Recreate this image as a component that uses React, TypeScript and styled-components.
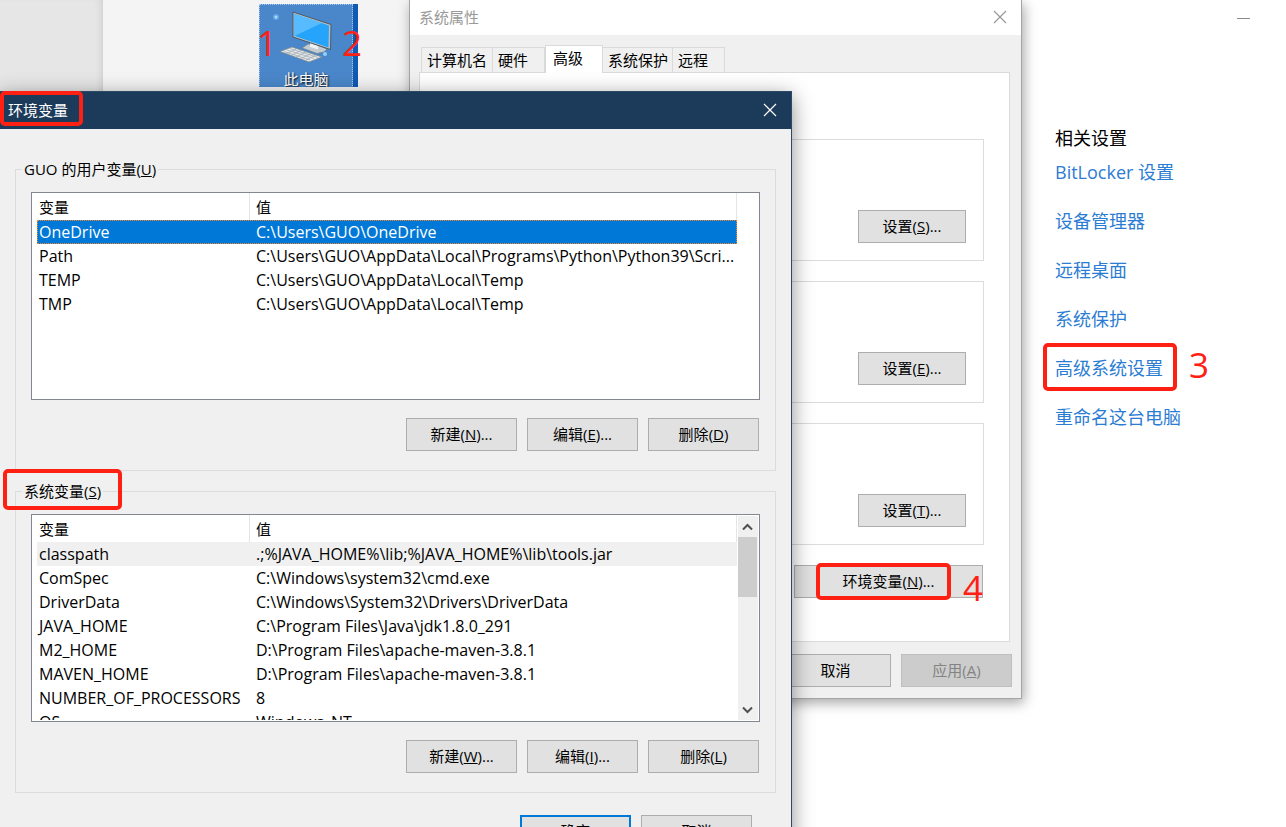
import React from "react";
import styled, { createGlobalStyle } from "styled-components";

const GlobalStyle = createGlobalStyle`
  * { box-sizing: border-box; }
  body {
    margin: 0;
    background: #fff;
    color: #000;
    font: 15px/20px "Open Sans", "Noto Sans CJK SC", sans-serif;
  }
  button { font: inherit; color: inherit; margin: 0; padding: 0; }
`;

const RED = "#ff2014";

const Desktop = styled.main`
  position: relative;
  display: flex;
  height: 100vh;
  min-height: 480px;
  overflow: hidden;
`;

const NavPane = styled.div`
  flex: 0 0 103px;
  background: #e6e6e6;
  box-shadow: inset -6px 0 8px -6px rgba(0, 0, 0, 0.15);
`;

const ContentPane = styled.div`
  flex: 0 0 500px;
  padding: 4px 0 0 156px;
  background: #f4f4f4;
`;

const ShortcutTile = styled.figure`
  display: flex;
  width: 99px;
  height: 83px;
  margin: 0;
  padding-right: 5px;
  overflow: hidden;
  background: #1059b5;
`;

const ShortcutFace = styled.div`
  display: flex;
  flex-direction: column;
  align-items: center;
  flex: 1;
  height: 90px;
  border: 1px dotted #a9c8ec;
  background: #4a87ca;
  color: #fff;
  text-shadow: 1px 1px 2px #000;
`;

const RelatedPane = styled.aside`
  display: flex;
  flex: 1;
  flex-direction: column;
  padding: 16px 36px 0 452px;
  font-size: 18px;
  line-height: 24px;
`;

const MinimizeButton = styled.button`
  align-self: flex-end;
  width: 13px;
  height: 3px;
  border: 0;
  border-bottom: 1px solid #8a8a8a;
  background: none;
`;

const RelatedTitle = styled.h2`
  margin: 107px 0 10px;
  font-size: inherit;
  font-weight: 400;
`;

const RelatedList = styled.nav`
  display: flex;
  flex-direction: column;
  align-items: flex-start;
  gap: 25px;
  white-space: nowrap;
`;

const RelatedLink = styled.a`
  color: #2b7cd3;
  text-decoration: none;
`;

const PropertiesWindow = styled.section`
  position: absolute;
  top: 0;
  left: 409px;
  width: 613px;
  border: 1px solid #a5a5a5;
  border-top: 0;
  background: #f0f0f0;
  box-shadow: 2px 4px 12px rgba(0, 0, 0, 0.35);
`;

const EnvironmentWindow = styled.section`
  position: absolute;
  top: 91px;
  left: -1px;
  width: 793px;
  border: 1px solid #2c4a66;
  background: #f0f0f0;
  box-shadow: 0 5px 20px rgba(0, 0, 0, 0.45);
`;

const TitleBar = styled.header<{ $active?: boolean }>`
  display: flex;
  align-items: center;
  justify-content: space-between;
  height: ${(p) => (p.$active ? 37 : 35)}px;
  padding: 0 14px 2px ${(p) => (p.$active ? 8 : 9)}px;
  background: ${(p) => (p.$active ? "#1c3a59" : "#fff")};
  color: ${(p) => (p.$active ? "#fff" : "#999")};
`;

const WindowTitle = styled.h1`
  margin: 0;
  font-size: inherit;
  font-weight: 400;
`;

const IconButton = styled.button`
  display: flex;
  border: 0;
  background: none;
`;

const TabStrip = styled.div`
  display: flex;
  align-items: flex-end;
  padding: 10px 0 0 11px;
`;

const Tab = styled.button<{ $active?: boolean; $width: number }>`
  position: relative;
  width: ${(p) => p.$width}px;
  height: ${(p) => (p.$active ? 28 : 25)}px;
  margin-bottom: ${(p) => (p.$active ? -1 : 0)}px;
  padding: 0 0 ${(p) => (p.$active ? 4 : 0)}px ${(p) => (p.$active ? 7 : 5)}px;
  border: 1px solid #dadada;
  border-width: 1px 1px 0 ${(p) => (p.$active ? 1 : 0)}px;
  background: ${(p) => (p.$active ? "#fff" : "#f0f0f0")};
  text-align: left;
  white-space: nowrap;

  &:first-child { border-left-width: 1px; }
`;

const TabPanel = styled.div`
  display: flex;
  flex-direction: column;
  gap: 20px;
  height: 570px;
  margin: 0 11px 0 9px;
  padding: 66px 25px 0 24px;
  border: 1px solid #dadada;
  background: #fff;
`;

const SettingsGroup = styled.div`
  display: flex;
  align-items: flex-end;
  justify-content: flex-end;
  height: 122px;
  padding: 17px;
  border: 1px solid #dcdcdc;
`;

const Button = styled.button<{ $width?: number; $primary?: boolean }>`
  width: ${(p) => p.$width ?? 111}px;
  height: 33px;
  padding-bottom: 2px;
  border: ${(p) => (p.$primary ? "2px solid #0078d7" : "1px solid #adadad")};
  background: #e1e1e1;

  &:disabled {
    border-color: #bfbfbf;
    background: #ccc;
    color: #838383;
  }
`;

const ButtonRow = styled.div`
  display: flex;
  justify-content: flex-end;
  gap: 10px;
  padding-right: 1px;
`;

const PropertiesFooter = styled(ButtonRow)`
  padding: 12px 9px 11px;
`;

const EnvironmentBody = styled.div`
  display: flex;
  flex-direction: column;
  gap: 10px;
  padding: 30px 15px 20px;
`;

const EnvironmentFooter = styled(ButtonRow)`
  padding: 12px 24px 0 0;
`;

const VariableGroup = styled.fieldset`
  min-width: 0;
  margin: 0;
  padding: 13px 15px 19px;
  border: 1px solid #dcdcdc;

  legend { margin-left: -9px; padding: 0 2px; }
`;

const ListBox = styled.div`
  display: flex;
  height: 208px;
  margin-bottom: 18px;
  padding: 0 1px 1px 5px;
  border: 1px solid #828790;
  background: #fff;
`;

const Viewport = styled.div`
  flex: 1;
  overflow: hidden;
`;

const VariableTable = styled.table`
  width: 700px;
  table-layout: fixed;
  border-collapse: separate;
  border-spacing: 0;

  th, td {
    height: 24px;
    padding: 0 2px;
    overflow: hidden;
    font-weight: 400;
    text-align: left;
    text-overflow: ellipsis;
    white-space: nowrap;
  }
  th { height: 27px; border-right: 1px solid #e5e5e5; }
  th:first-child { width: 213px; }
  th + th, td + td { padding-left: 6px; }
  td { font-size: 16px; line-height: 24px; }
`;

const VariableRow = styled.tr<{ $state?: "selected" | "hover" }>`
  background: ${(p) =>
    p.$state === "selected" ? "#0078d7" : p.$state === "hover" ? "#f0f0f0" : "transparent"};
  color: ${(p) => (p.$state === "selected" ? "#fff" : "#000")};
  outline: ${(p) => (p.$state === "selected" ? "1px dotted #ff8728" : "none")};
  outline-offset: -1px;
`;

const Scrollbar = styled.div`
  display: flex;
  flex: 0 0 20px;
  flex-direction: column;
  margin-top: 1px;
  background: #f0f0f0;
`;

const ScrollButton = styled(IconButton)`
  align-items: center;
  justify-content: center;
  flex: 0 0 21px;
  width: 19px;
`;

const ScrollTrack = styled.div`
  flex: 1;
`;

const ScrollThumb = styled.div`
  width: 19px;
  height: 60px;
  background: #cdcdcd;
`;

const Highlight = styled.div<{ $x: number; $y: number; $w: number; $h: number }>`
  position: absolute;
  top: ${(p) => p.$y}px;
  left: ${(p) => p.$x}px;
  width: ${(p) => p.$w}px;
  height: ${(p) => p.$h}px;
  border: 4px solid ${RED};
  border-radius: 5px;
  pointer-events: none;
`;

const StepNumber = styled.span<{ $x: number; $y: number }>`
  position: absolute;
  top: ${(p) => p.$y}px;
  left: ${(p) => p.$x}px;
  color: ${RED};
  font-size: 35px;
  line-height: 36px;
  pointer-events: none;
`;

const CloseIcon = () => (
  <svg width="14" height="14" viewBox="0 0 14 14" fill="none" stroke="currentColor" strokeWidth="1.2">
    <path d="M1 1 13 13M13 1 1 13" />
  </svg>
);

const Chevron = ({ down }: { down?: boolean }) => (
  <svg width="11" height="8" viewBox="0 0 11 8" fill="none" stroke="#505050" strokeWidth="2">
    <path d={down ? "M1 1.5 5.5 6 10 1.5" : "M1 6.5 5.5 2 10 6.5"} />
  </svg>
);

const ComputerIcon = () => (
  <svg width="56" height="64" viewBox="1 0 56 64" overflow="visible">
    <circle cx="-1" cy="12" r="3" fill="#63a6e4" />
    <circle cx="-1" cy="12" r="1.500" fill="#a5dcfb" />
    <path d="M25 43 31 39 40 40 50 44 47 47 40 48.500Z" fill="#c3ccd1" stroke="#6d7d88" strokeWidth=".7" />
    <path d="M33 38 41 41 41 44.500 33 42Z" fill="#eef2f4" />
    <path d="M16 7 54 19.500 53.500 44.500 16 32Z" fill="#b9c0c5" stroke="#46525c" strokeWidth=".9" />
    <path d="M17.500 9 52 20.500 51.500 42.500 17.500 31Z" fill="#26a4fb" />
    <path d="M17.500 9 45 18 17.500 31Z" fill="#56bcff" />
    <path d="M3 46.500 15 42 45 52 32 57Z" fill="#e6e9ea" stroke="#7d8991" strokeWidth=".8" />
    <path
      d="M7 46.500 33 55M10 45 37 53.500M13 43.500 41 52.500M9 49 19 44M14 50.500 24 45.500M19 52 29 47M24 53.500 34 48.500M29 55 39 50"
      stroke="#98a5ad"
      strokeWidth=".7"
    />
    <circle cx="48" cy="49" r="2" fill="#8ed2fa" />
  </svg>
);

type Variable = { name: string; value: string };

const userVariables: Variable[] = [
  { name: "OneDrive", value: "C:\\Users\\GUO\\OneDrive" },
  { name: "Path", value: "C:\\Users\\GUO\\AppData\\Local\\Programs\\Python\\Python39\\Scri..." },
  { name: "TEMP", value: "C:\\Users\\GUO\\AppData\\Local\\Temp" },
  { name: "TMP", value: "C:\\Users\\GUO\\AppData\\Local\\Temp" },
];

const systemVariables: Variable[] = [
  { name: "classpath", value: ".;%JAVA_HOME%\\lib;%JAVA_HOME%\\lib\\tools.jar" },
  { name: "ComSpec", value: "C:\\Windows\\system32\\cmd.exe" },
  { name: "DriverData", value: "C:\\Windows\\System32\\Drivers\\DriverData" },
  { name: "JAVA_HOME", value: "C:\\Program Files\\Java\\jdk1.8.0_291" },
  { name: "M2_HOME", value: "D:\\Program Files\\apache-maven-3.8.1" },
  { name: "MAVEN_HOME", value: "D:\\Program Files\\apache-maven-3.8.1" },
  { name: "NUMBER_OF_PROCESSORS", value: "8" },
  { name: "OS", value: "Windows_NT" },
];

const relatedLinks = ["BitLocker 设置", "设备管理器", "远程桌面", "系统保护", "高级系统设置", "重命名这台电脑"];

const tabs = [
  { label: "计算机名", width: 72 },
  { label: "硬件", width: 52 },
  { label: "高级", width: 58, active: true },
  { label: "系统保护", width: 70 },
  { label: "远程", width: 52 },
];

const Caption = ({ text, hotkey, more }: { text: string; hotkey: string; more?: boolean }) => (
  <>
    {text}(<u>{hotkey}</u>){more && "..."}
  </>
);

type VariableSectionProps = {
  title: string;
  hotkey: string;
  rows: Variable[];
  firstRow: "selected" | "hover";
  keys: [string, string, string];
  scrollable?: boolean;
};

const VariableSection = ({ title, hotkey, rows, firstRow, keys, scrollable }: VariableSectionProps) => (
  <VariableGroup>
    <legend>
      <Caption text={title} hotkey={hotkey} />
    </legend>
    <ListBox>
      <Viewport>
        <VariableTable>
          <thead>
            <tr>
              <th>变量</th>
              <th>值</th>
            </tr>
          </thead>
          <tbody>
            {rows.map((row, i) => (
              <VariableRow key={row.name} $state={i === 0 ? firstRow : undefined}>
                <td>{row.name}</td>
                <td>{row.value}</td>
              </VariableRow>
            ))}
          </tbody>
        </VariableTable>
      </Viewport>
      {scrollable && (
        <Scrollbar>
          <ScrollButton aria-label="向上滚动"><Chevron /></ScrollButton>
          <ScrollTrack><ScrollThumb /></ScrollTrack>
          <ScrollButton aria-label="向下滚动"><Chevron down /></ScrollButton>
        </Scrollbar>
      )}
    </ListBox>
    <ButtonRow>
      <Button type="button"><Caption text="新建" hotkey={keys[0]} more /></Button>
      <Button type="button"><Caption text="编辑" hotkey={keys[1]} more /></Button>
      <Button type="button"><Caption text="删除" hotkey={keys[2]} /></Button>
    </ButtonRow>
  </VariableGroup>
);

export default function App() {
  return (
    <Desktop>
      <GlobalStyle />
      <NavPane />
      <ContentPane>
        <ShortcutTile>
          <ShortcutFace>
            <ComputerIcon />
            <figcaption>此电脑</figcaption>
          </ShortcutFace>
        </ShortcutTile>
      </ContentPane>
      <RelatedPane>
        <MinimizeButton aria-label="最小化" />
        <RelatedTitle>相关设置</RelatedTitle>
        <RelatedList>
          {relatedLinks.map((label) => (
            <RelatedLink key={label} href="#">{label}</RelatedLink>
          ))}
        </RelatedList>
      </RelatedPane>

      <PropertiesWindow>
        <TitleBar>
          <WindowTitle>系统属性</WindowTitle>
          <IconButton aria-label="关闭"><CloseIcon /></IconButton>
        </TitleBar>
        <TabStrip role="tablist">
          {tabs.map((tab) => (
            <Tab key={tab.label} role="tab" aria-selected={!!tab.active} $active={tab.active} $width={tab.width}>
              {tab.label}
            </Tab>
          ))}
        </TabStrip>
        <TabPanel role="tabpanel">
          {["S", "E", "T"].map((key) => (
            <SettingsGroup key={key}>
              <Button type="button" $width={108}><Caption text="设置" hotkey={key} more /></Button>
            </SettingsGroup>
          ))}
          <ButtonRow>
            <Button type="button" $width={189}><Caption text="环境变量" hotkey="N" more /></Button>
          </ButtonRow>
        </TabPanel>
        <PropertiesFooter>
          <Button type="button">取消</Button>
          <Button type="button" disabled><Caption text="应用" hotkey="A" /></Button>
        </PropertiesFooter>
      </PropertiesWindow>

      <EnvironmentWindow>
        <TitleBar $active>
          <WindowTitle>环境变量</WindowTitle>
          <IconButton aria-label="关闭"><CloseIcon /></IconButton>
        </TitleBar>
        <EnvironmentBody>
          <VariableSection
            title="GUO 的用户变量"
            hotkey="U"
            rows={userVariables}
            firstRow="selected"
            keys={["N", "E", "D"]}
          />
          <VariableSection
            title="系统变量"
            hotkey="S"
            rows={systemVariables}
            firstRow="hover"
            keys={["W", "I", "L"]}
            scrollable
          />
          <EnvironmentFooter>
            <Button type="button" $primary>确定</Button>
            <Button type="button">取消</Button>
          </EnvironmentFooter>
        </EnvironmentBody>
      </EnvironmentWindow>

      <Highlight $x={0} $y={91} $w={83} $h={35} />
      <Highlight $x={3} $y={469} $w={119} $h={41} />
      <Highlight $x={1043} $y={343} $w={134} $h={48} />
      <Highlight $x={816} $y={563} $w={135} $h={37} />
      <StepNumber $x={257} $y={25}>1</StepNumber>
      <StepNumber $x={342} $y={25}>2</StepNumber>
      <StepNumber $x={1189} $y={347}>3</StepNumber>
      <StepNumber $x={963} $y={570}>4</StepNumber>
    </Desktop>
  );
}
